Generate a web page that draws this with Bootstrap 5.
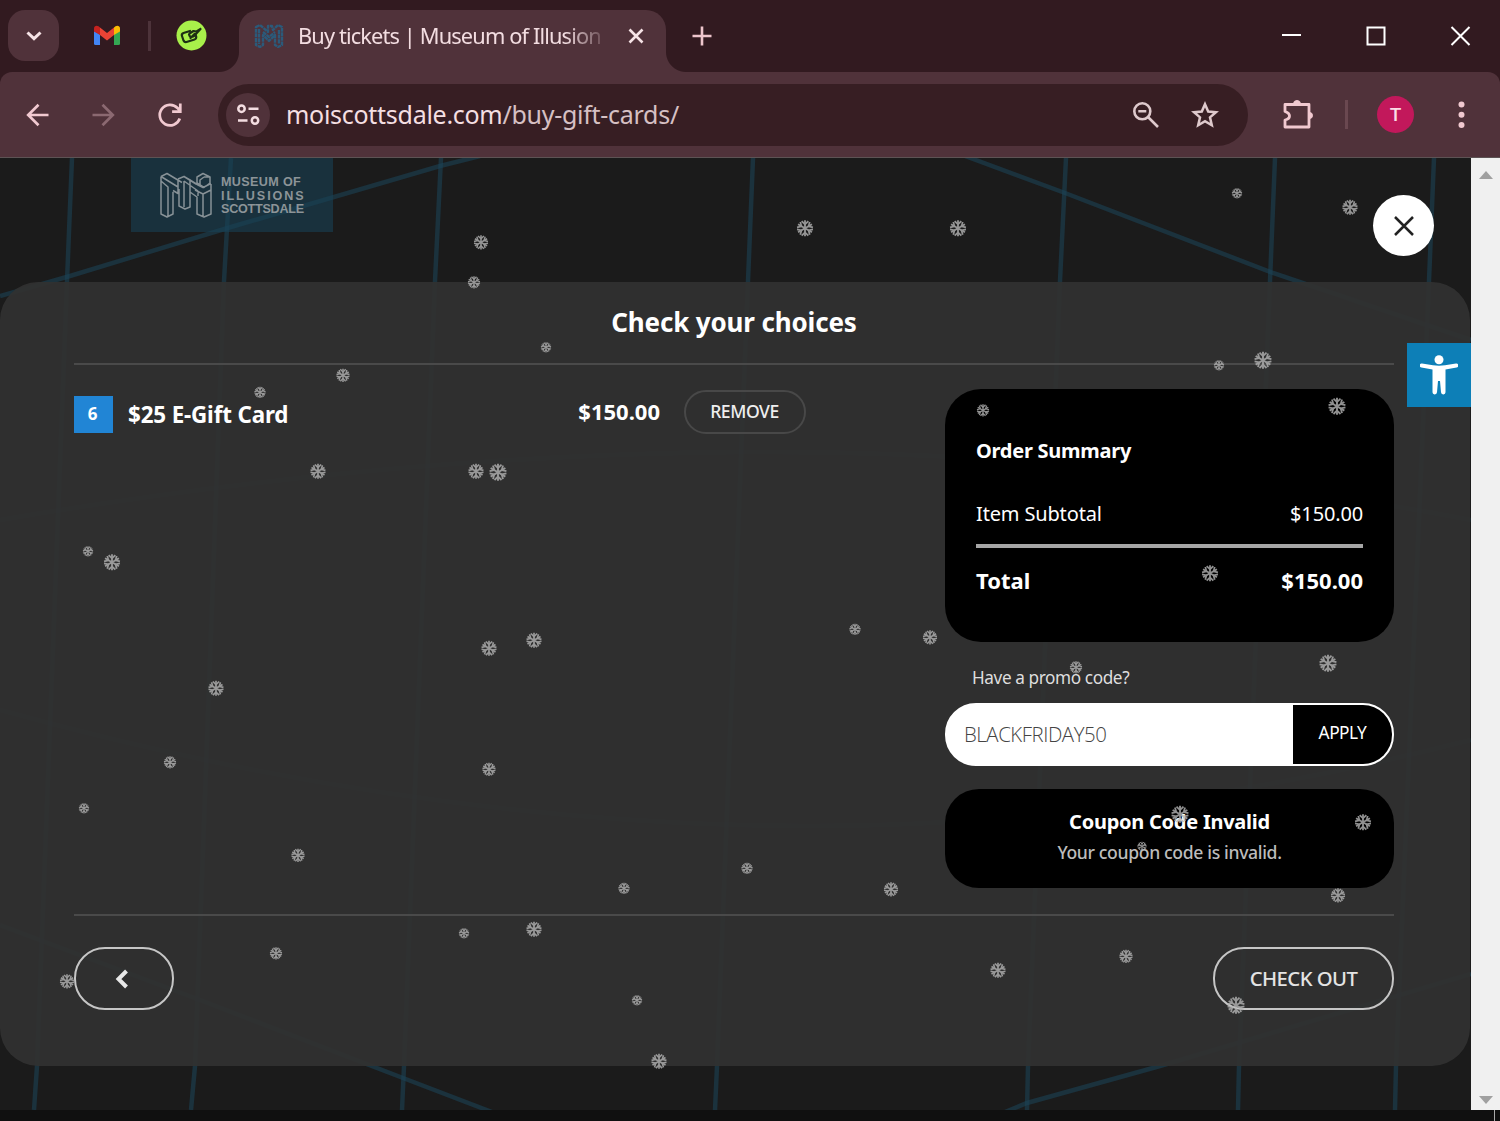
<!DOCTYPE html>
<html lang="en">
<head>
<meta charset="utf-8">
<title>Buy tickets | Museum of Illusions</title>
<link href="https://cdn.jsdelivr.net/npm/bootstrap@5.3.0/dist/css/bootstrap.min.css" rel="stylesheet">
<style>
body{width:1500px;height:1121px;overflow:hidden;background:#101010;font-family:"Noto Sans","Open Sans",sans-serif;color:#fff}
svg{display:block;flex:none}
.titlebar{height:72px;background:#321a20}
.tab-search{width:51px;height:51px;margin:10px 0 0 8px;border-radius:17px;background:#50323a}
.pin-gmail{margin:25px 0 0 34px}
.pin-sep{width:3px;height:30px;margin:21px 0 0 27px;background:#4d333a}
.pin-green{margin:20px 0 0 25px}
.tab-active{width:427px;height:62px;margin:10px 0 0 32px;background:#50323a;border-radius:20px 20px 0 0;padding:0 22px 10px 15px}
.tab-active::before,.tab-active::after{content:"";position:absolute;bottom:0;width:20px;height:20px}
.tab-active::before{left:-20px;background:radial-gradient(circle at 0 0,transparent 19.5px,#50323a 20.5px)}
.tab-active::after{right:-20px;background:radial-gradient(circle at 100% 0,transparent 19.5px,#50323a 20.5px)}
.tab-title{margin-left:14px;font:21.8px/30px "Noto Sans",sans-serif;letter-spacing:-.87px;color:#f3dde1;-webkit-mask-image:linear-gradient(90deg,#000 88%,rgba(0,0,0,.2));padding-bottom:1px}
.new-tab{margin:26px 0 0 26px}
.win-btns{margin:0 29px 0 auto;gap:64px;height:71px}
.toolbar{height:85px;background:#50323a;border-radius:12px 12px 0 0}
.toolbar-wrap{background:#321a20}
.omnibox{width:1030px;height:62px;border-radius:31px;background:#371e23;margin-left:35px;padding:0 29px 0 8px}
.site-info{width:44px;height:44px;border-radius:50%;background:#50323a}
.url{font:25px/34px "Noto Sans",sans-serif;letter-spacing:-.28px;color:#f4dfe2;margin-left:16px;padding-bottom:2px}
.url span{color:#d6c0c3}
.avatar-t{width:37px;height:37px;border-radius:50%;background:#c2185b;font:500 19px/37px Roboto,sans-serif;color:#fbdde6}
.tool-sep{width:3px;height:29px;background:#6a4850}
.edge{height:1px;background:#5d5354}
.viewport{height:952px}
.site{width:1471px;background:#1b1b1b;overflow:hidden}
.scroll-rail{width:29px;background:#f0f0f0;padding:12px 0 5px}
.site-head{height:124px;padding:0 37px 0 131px}
.brand-box{width:202px;height:74px;background:rgba(24,66,86,.58);padding-left:28px}
.brand-name{font:bold 12.6px/13.6px "Liberation Sans",Arial,sans-serif;color:#8c9498;margin:3px 0 0 9px}
.brand-name span{display:block;white-space:nowrap}
.close-round{width:61px;height:61px;border-radius:50%;background:#fff;margin-top:37px}
.panel{width:1470px;height:784px;border-radius:38px;background:rgba(49,49,49,.94);padding:0 76px 0 74px}
.panel-title{height:83px;border-bottom:2px solid #4a4a4a;font-size:26px;font-weight:700;letter-spacing:-.15px;margin:0}
.panel-body{height:551px;padding-top:24px;border-bottom:2px solid #4a4a4a}
.qty{width:39px;height:37px;background:#2185d5;font-size:17px;font-weight:700;padding-right:2px}
.item-row{width:732px;height:46px}
.item-name{font-size:22.4px;font-weight:700;letter-spacing:-.15px;margin:5px 0 0 15px}
.item-price{font-size:22px;font-weight:700;letter-spacing:0;padding-bottom:2px}
.remove-btn{width:122px;height:44px;border:2px solid #484848;border-radius:22px;font-size:17.6px;font-weight:500;letter-spacing:-.45px;color:#eee;margin-left:24px;background:none;padding:0 1px 2px 0}
.side{width:449px}
.summary{height:253px;border-radius:36px;background:#000;padding:47px 31px 0 31px}
.sum-title{font-size:20px;font-weight:700;line-height:30px;margin:0;letter-spacing:-.25px}
.sum-line{font-size:20px;line-height:30px;margin-top:33px;letter-spacing:-.15px}
.sum-rule{height:4px;background:#a6a6a6;margin-top:15px}
.sum-total{font-size:22px;font-weight:700;line-height:30px;margin-top:17px}
.promo-label{font-size:17.2px;line-height:24px;margin:24px 0 0 27px;letter-spacing:-.4px;color:#dedede}
.promo-box{height:63px;border:2px solid #fff;border-radius:31px;background:#fff;margin-top:13px;overflow:hidden}
.promo-code{font:300 20.4px/58px "Open Sans","Noto Sans",sans-serif;color:#444;letter-spacing:-.45px;padding-left:17px}
.apply{width:99px;background:#000;color:#fff;font-size:17.3px;letter-spacing:-.5px;padding-bottom:3px}
.notice{height:99px;border-radius:34px;background:#000;margin-top:23px;padding-top:18px}
.notice-head{font-size:20px;font-weight:700;line-height:30px;letter-spacing:-.25px}
.notice-text{font-size:17.6px;line-height:30px;font-weight:500;color:#bcbcbc;letter-spacing:-.35px}
.pill{height:63px;border:2px solid #c6c6c6;border-radius:31px;background:none;color:#e4e4e4}
.panel-foot{padding-top:31px}
.back-btn{width:100px}
.check-btn{width:181px;font-size:20.3px;font-weight:500;letter-spacing:-.55px}
.access{width:64px;height:64px;right:29px;top:185px;background:#0d7fb7}
.bottom-edge{height:11px;background:#101010}
.bottom-edge i{width:1px;height:11px;background:#aaa;margin-right:5px}
</style>
<script src="https://cdn.jsdelivr.net/npm/bootstrap@5.3.0/dist/js/bootstrap.bundle.min.js"></script>
</head>
<body>
<header>
  <div class="titlebar d-flex">
    <div class="tab-search d-flex align-items-center justify-content-center">
      <svg width="18" height="12" viewBox="0 0 18 12" fill="none" stroke="#f6e3e6" stroke-width="3"><path d="M2.500 2.500 9 8.700l6.500-6.200"/></svg>
    </div>
    <svg class="pin-gmail" width="28" height="21" viewBox="0 0 28 21"><path fill="#4285f4" d="M1 6v12.500Q1 20 2.500 20H7V9.500z"/><path fill="#34a853" d="M27 6v12.500q0 1.500-1.500 1.500H21V9.500z"/><path fill="#ea4335" d="M7 2.500 14 8l7-5.500V10l-7 5.500L7 10z"/><path fill="#c5221f" d="M1 6V3.500C1 1 3.500 0 5.500 1.300L7 2.500V10L1 6.500z"/><path fill="#fbbc04" d="M27 6.500V3.500c0-2.500-2.500-3.500-4.500-2.200L21 2.500V10z"/></svg>
    <div class="pin-sep"></div>
    <svg class="pin-green" width="31" height="31" viewBox="0 0 31 31"><circle cx="15.500" cy="15.500" r="15" fill="#a8f04a"/><g fill="none" stroke="#1d3014" stroke-width="2.200" stroke-linecap="round" stroke-linejoin="round"><path d="M14 11 7.500 13q-2.300 1-1.500 3l1.500 4.500q1 2 3 1.500l8-2.500q2-.7 1.700-3L19.500 14.500"/><path d="M13 14.500q1 4 5 1.500l6.500-7M13.500 13.500l4-2.500 3 .5 4-2.500M14.500 18l4-4"/></g></svg>
    <div class="tab-active position-relative d-flex align-items-center">
      <svg width="30" height="24" viewBox="0 0 30 24" fill="none" stroke="#2b5a7a" stroke-width="2.400" stroke-linejoin="round" stroke-dasharray="4 .6"><path d="M2 3 6 1l8 7V2h4l1 4 5-5 4 2v18l-4 2-3-2V11l-6 6-6-6v10l-3 2-4-2z"/><path d="M5 5v15M25 6v14M9 8l6 5 6-5"/></svg>
      <div class="tab-title text-nowrap">Buy tickets | Museum of Illusion</div>
      <svg class="ms-auto" width="16" height="16" viewBox="0 0 16 16" fill="none" stroke="#f6e3e6" stroke-width="2.600"><path d="m1.500 1.500 13 13m0-13-13 13"/></svg>
    </div>
    <svg class="new-tab" width="20" height="20" viewBox="0 0 20 20" stroke="#eec5cc" stroke-width="2.600"><path d="M10 .500v19M.500 10h19"/></svg>
    <div class="win-btns d-flex align-items-center">
      <svg width="21" height="20" viewBox="0 0 21 20" stroke="#fff" stroke-width="2"><path d="M1 9h19"/></svg>
      <svg width="20" height="20" viewBox="0 0 20 20" stroke="#fff" stroke-width="2" fill="none"><path d="M1.500 1.500h17v17h-17z"/></svg>
      <svg width="21" height="20" viewBox="0 0 21 20" stroke="#fff" stroke-width="2"><path d="m1.500 1 18 18m0-18-18 18"/></svg>
    </div>
  </div>
  <div class="toolbar-wrap">
  <div class="toolbar d-flex align-items-center">
    <svg style="margin-left:26px" width="23" height="24" viewBox="0 0 23 24" fill="none" stroke="#f1c9d0" stroke-width="2.700"><path d="M22.500 12H2.500M12.500 1.700 2.200 12l10.300 10.300"/></svg>
    <svg style="margin-left:43px" width="23" height="24" viewBox="0 0 23 24" fill="none" stroke="#8b6971" stroke-width="2.700"><path d="M.5 12h20M10.500 1.700 20.800 12 10.500 22.300"/></svg>
    <svg style="margin-left:42px" width="26" height="26" viewBox="0 0 26 26" fill="none" stroke="#f1c9d0" stroke-width="2.700"><path d="M22.800 16.500A10.300 10.300 0 1 1 20.500 6L23 8.500M23.300 1.500v8.200h-8.200"/></svg>
    <div class="omnibox d-flex align-items-center">
      <div class="site-info d-flex align-items-center justify-content-center">
        <svg width="24" height="22" viewBox="0 0 24 22" fill="none" stroke="#f3dde1" stroke-width="2.500"><circle cx="5.500" cy="4.700" r="3.200"/><circle cx="19" cy="16.500" r="3.200"/><path d="M12.500 4.700H22.500M2 16.500h9.500"/></svg>
      </div>
      <div class="url text-nowrap">moiscottsdale.com<span>/buy-gift-cards/</span></div>
      <svg class="ms-auto" width="28" height="28" viewBox="0 0 28 28" fill="none" stroke="#dec9cc" stroke-width="2.600"><circle cx="10.300" cy="10.300" r="8"/><path d="m16 16 10 10M6.300 10.300h8"/></svg>
      <svg style="margin-left:31px" width="28" height="27" viewBox="0 0 28 27" fill="none" stroke="#dec9cc" stroke-width="2.500"><path d="m14 3.200 3.200 7.300 7.800.7-6 5.200 1.800 7.800-6.800-4.100-6.800 4.100L9 16.400l-6-5.200 7.800-.7z"/></svg>
    </div>
    <svg style="margin-left:35px;margin-bottom:2px" width="30" height="30" viewBox="0 0 30 30" fill="none" stroke="#f1c9d0" stroke-width="2.800" stroke-linejoin="round"><path d="M2 5.500h24v22.500H2v-7q4.500-1 4.500-4T2 12.500z"/><path d="M10.500 5a3.500 3.500 0 0 1 7 0M26.500 13.500a3 3 0 0 1 0 6" fill="#f1c9d0"  stroke-width="1"/></svg>
    <div class="tool-sep" style="margin-left:32px"></div>
    <div class="avatar-t text-center" style="margin-left:29px">T</div>
    <svg style="margin-left:44px" width="7" height="28" viewBox="0 0 7 28" fill="#f1c9d0"><circle cx="3.500" cy="3.500" r="3"/><circle cx="3.500" cy="13.700" r="3"/><circle cx="3.500" cy="24" r="3"/></svg>
  </div>
  </div>
  <div class="edge"></div>
</header>
<main class="viewport d-flex position-relative">
  <div class="site position-relative">
    <svg class="position-absolute top-0 start-0" width="1471" height="952" viewBox="0 158 1471 952" fill="none" stroke="#1b4659" stroke-opacity=".55" stroke-width="4.500">
      <path d="M72 158 67 281 37 1066 34 1110M231 158l-7 123-29 785-4 44M441 158l-6 123-31 785-2 44M753 158l-5 123-31 785-2 44M1066 158l-6 123-32 785-1 44M1275 158l-5 123-31 785-1 44M1434 158l-5 123-33 785-1 44"/>
      <path d="M0 296 70 276 231 227 440 166 480 156M965 156 1065 193 1273 273 1471 340M0 925 200 1000 403 1078 492 1112M1005 1112 1027 1103 1160 1066 1471 974"/>
      <path stroke-opacity=".25" d="M0 520Q380 455 740 452T1471 520M0 710Q380 815 740 825T1471 740"/>
    </svg>
    <div class="position-relative">
      <div class="site-head d-flex justify-content-between align-items-start">
        <div class="brand-box d-flex align-items-center">
          <svg width="53" height="46" viewBox="0 0 53 46" fill="none" stroke="#879196" stroke-width="1.500" stroke-linejoin="round"><path d="M2 4.500 8 1.500l15 9M2 4.500V42l6 3 6-3V20M2 4.500 19 15M2 9l7 6v30M14 18.500l5 3V7M19 7l6-2.500L31 8v27l-5 2-6-3V17M25 4.500 37 12M25 9l14 10M25 9v26M31 8l8 5M31 20l7 5v17l7 3 7-3V12M44 22v23M36 18l8 4 8-4M39 19v5M39 13l5 2.500 8-4M38 5l6-3.500L51 5v6l-6 4.500L38 11zM45 5l-4 3v5M45 5l6 0"/></svg>
          <div class="brand-name">
            <span style="letter-spacing:.35px">MUSEUM OF</span><span style="letter-spacing:1.950px">ILLUSIONS</span><span style="letter-spacing:-.25px">SCOTTSDALE</span>
          </div>
        </div>
        <div class="close-round d-flex align-items-center justify-content-center">
          <svg width="20" height="20" viewBox="0 0 20 20" stroke="#222" stroke-width="2.500"><path d="m1 1 18 18m0-18L1 19"/></svg>
        </div>
      </div>
      <section class="panel">
        <h1 class="panel-title d-flex align-items-center justify-content-center">Check your choices</h1>
        <div class="panel-body d-flex justify-content-between align-items-start">
          <div class="item-row d-flex align-items-center">
            <div class="qty d-flex align-items-center justify-content-center mt-1">6</div>
            <div class="item-name">$25 E-Gift Card</div>
            <div class="item-price ms-auto">$150.00</div>
            <button class="remove-btn">REMOVE</button>
          </div>
          <div class="side">
            <div class="summary">
              <h2 class="sum-title">Order Summary</h2>
              <div class="sum-line d-flex justify-content-between"><span>Item Subtotal</span><span>$150.00</span></div>
              <div class="sum-rule"></div>
              <div class="sum-total d-flex justify-content-between"><span>Total</span><span>$150.00</span></div>
            </div>
            <div class="promo-label">Have a promo code?</div>
            <div class="promo-box d-flex">
              <div class="promo-code flex-grow-1">BLACKFRIDAY50</div>
              <div class="apply d-flex align-items-center justify-content-center">APPLY</div>
            </div>
            <div class="notice text-center">
              <div class="notice-head">Coupon Code Invalid</div>
              <div class="notice-text">Your coupon code is invalid.</div>
            </div>
          </div>
        </div>
        <div class="panel-foot d-flex justify-content-between">
          <button class="pill back-btn d-flex align-items-center justify-content-center p-0 pe-1" aria-label="Back"><svg width="14" height="20" viewBox="0 0 14 20" fill="none" stroke="#e8e8e8" stroke-width="4"><path d="M11.500 2 3.500 10l8 8"/></svg></button>
          <button class="pill check-btn p-0">CHECK OUT</button>
        </div>
      </section>
    </div>
    <svg id="snow" class="position-absolute top-0 start-0 pe-none" width="1471" height="952" viewBox="0 158 1471 952">
      <defs><g id="flake" fill="none" stroke="#b4b4b4" stroke-width="1.800"><path d="M0-8V8M-6.900-4 6.900 4M-6.900 4 6.900-4"/><path stroke-width="1.700" d="M-3.300-7.200 0-4l3.300-3.200M-3.300 7.200 0 4l3.300 3.200M-7.900-1-3.500-2l-1.200-4.400M7.900-1 3.500-2l1.200-4.400M-7.900 1-3.500 2l-1.200 4.400M7.900 1 3.500 2l1.200 4.400"/></g></defs>
    </svg>
  </div>
  <div class="scroll-rail d-flex flex-column justify-content-between align-items-center">
    <svg width="14" height="9" viewBox="0 0 14 9" fill="#a0a0a0"><path d="M0 9 7 1l7 8z"/></svg>
    <svg width="14" height="9" viewBox="0 0 14 9" fill="#a0a0a0"><path d="M0 0h14L7 8z"/></svg>
  </div>
  <div class="access position-absolute d-flex align-items-center justify-content-center">
    <svg width="38" height="40" viewBox="0 0 38 40" fill="#fff"><circle cx="19" cy="4.700" r="4.500"/><path d="M2 8.500 13 10.300q6 .8 12 0L36 8.500a2 2 0 0 1 .6 4L25.500 14.500V37a2.200 2.200 0 0 1-4.500.3L20 26h-2l-1 11.300a2.200 2.200 0 0 1-4.500-.3V14.500L1.400 12.500a2 2 0 0 1 .6-4z"/></svg>
  </div>
</main>
<div class="bottom-edge d-flex justify-content-end"><i></i></div>
<script>
// Snowflakes: centre x, centre y, diameter
const flakes=[[1237,193,10],[1350,207,15],[805,228,16],[958,228,16],[481,242,14],[474,282,12],[546,347,10],[1219,365,10],[1263,360,17],[343,375,13],[260,392,11],[983,410,12],[1337,406,17],[318,471,15],[476,471,15],[498,472,17],[88,551,10],[112,562,16],[1210,573,16],[534,640,15],[489,648,15],[855,629,11],[930,637,14],[1076,667,12],[1328,663,17],[216,688,15],[170,762,12],[489,769,13],[84,808,10],[1363,822,16],[1180,814,17],[1142,846,9],[298,855,13],[747,868,11],[624,888,11],[891,889,14],[1338,895,14],[464,933,10],[534,929,15],[276,953,12],[998,970,15],[1126,956,13],[67,981,14],[637,1000,10],[1236,1005,17],[659,1061,15]];
const snow=document.getElementById('snow');
for(const [x,y,d] of flakes){
  const u=document.createElementNS('http://www.w3.org/2000/svg','use');
  u.setAttribute('href','#flake');
  u.setAttribute('transform',`translate(${x} ${y+.3}) scale(${(d+.6)/16.5})`);
  u.setAttribute('opacity',.8);
  snow.appendChild(u);
}
</script>
</body>
</html>
